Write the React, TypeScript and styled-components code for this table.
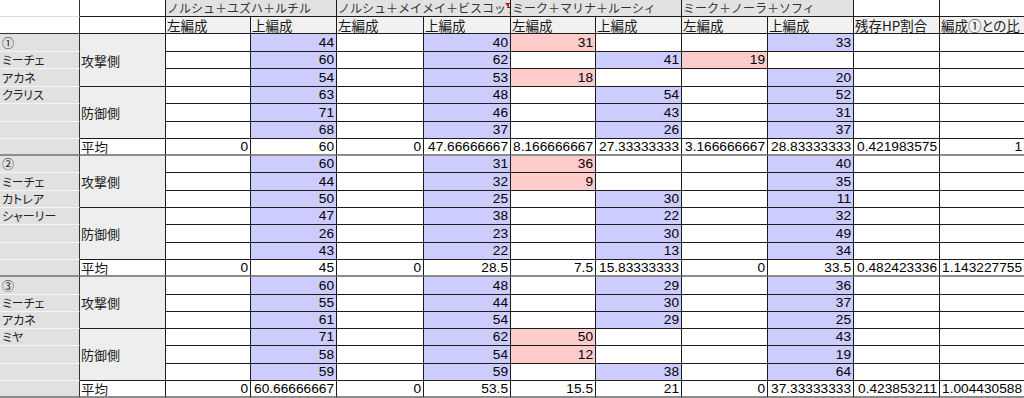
import React from 'react';
import styled, { createGlobalStyle } from 'styled-components';

type Tone = 'w' | 'b' | 'p';

type DataRow = {
  v: Array<string | number>;
  c: string;
};

type Section = {
  mark: string;
  names: string[];
  rows: DataRow[];
  avg: Array<string | number>;
};

const TONES: Record<Tone, string> = {
  w: '#ffffff',
  b: '#ccccff',
  p: '#ffcccc',
};

const ROW_HEIGHTS = [17, 17, 18, 17, 18, 17, 18, 17, 17, 17, 18, 17, 17, 18, 17, 17, 18, 17, 17, 17, 18, 17, 17];
const COL_WIDTHS = [80, 86, 85, 86, 87, 87, 85, 86, 86, 86, 86, 85];

const GROUPS = ['ノルシュ＋ユズハ＋ルチル', 'ノルシュ＋メイメイ＋ビスコッティ', 'ミーク＋マリナ＋ルーシィ', 'ミーク＋ノーラ＋ソフィ'];

const SECTIONS: Section[] = [
  {
    mark: '①',
    names: ['ミーチェ', 'アカネ', 'クラリス'],
    rows: [
      { v: ['', 44, '', 40, 31, '', '', 33, '', ''], c: 'wbwbpwwbww' },
      { v: ['', 60, '', 62, '', 41, 19, '', '', ''], c: 'wbwbwbpwww' },
      { v: ['', 54, '', 53, 18, '', '', 20, '', ''], c: 'wbwbpwwbww' },
      { v: ['', 63, '', 48, '', 54, '', 52, '', ''], c: 'wbwbwbwbww' },
      { v: ['', 71, '', 46, '', 43, '', 31, '', ''], c: 'wbwbwbwbww' },
      { v: ['', 68, '', 37, '', 26, '', 37, '', ''], c: 'wbwbwbwbww' },
    ],
    avg: [0, 60, 0, '47.66666667', '8.166666667', '27.33333333', '3.166666667', '28.83333333', '0.421983575', 1],
  },
  {
    mark: '②',
    names: ['ミーチェ', 'カトレア', 'シャーリー'],
    rows: [
      { v: ['', 60, '', 31, 36, '', '', 40, '', ''], c: 'wbwbpwwbww' },
      { v: ['', 44, '', 32, 9, '', '', 35, '', ''], c: 'wbwbpwwbww' },
      { v: ['', 50, '', 25, '', 30, '', 11, '', ''], c: 'wbwbwbwbww' },
      { v: ['', 47, '', 38, '', 22, '', 32, '', ''], c: 'wbwbwbwbww' },
      { v: ['', 26, '', 23, '', 30, '', 49, '', ''], c: 'wbwbwbwbww' },
      { v: ['', 43, '', 22, '', 13, '', 34, '', ''], c: 'wbwbwbwbww' },
    ],
    avg: [0, 45, 0, 28.5, 7.5, '15.83333333', 0, 33.5, '0.482423336', '1.143227755'],
  },
  {
    mark: '③',
    names: ['ミーチェ', 'アカネ', 'ミヤ'],
    rows: [
      { v: ['', 60, '', 48, '', 29, '', 36, '', ''], c: 'wbwbwbwbww' },
      { v: ['', 55, '', 44, '', 30, '', 37, '', ''], c: 'wbwbwbwbww' },
      { v: ['', 61, '', 54, '', 29, '', 25, '', ''], c: 'wbwbwbwbww' },
      { v: ['', 71, '', 62, 50, '', '', 43, '', ''], c: 'wbwbpwwbww' },
      { v: ['', 58, '', 54, 12, '', '', 19, '', ''], c: 'wbwbpwwbww' },
      { v: ['', 59, '', 59, '', 38, '', 64, '', ''], c: 'wbwbwbwbww' },
    ],
    avg: [0, '60.66666667', 0, 53.5, 15.5, 21, 0, '37.33333333', '0.423853211', '1.004430588'],
  },
];

export default function App() {
  return (
    <>
      <GlobalStyle />
      <Sheet>
        {/* header row 1 */}
        <NameCell $head $light />
        <HeadCell $tone="w" />
        {GROUPS.map((g, i) => (
          <GroupCell key={g}>
            {g}
            {i === 1 && <CommentMark />}
          </GroupCell>
        ))}
        <HeadCell $tone="w" />
        <HeadCell $tone="w" />

        {/* header row 2 */}
        <NameCell $head />
        <HeadCell $tone="w" />
        {GROUPS.map((g) => (
          <React.Fragment key={g}>
            <HeadCell>左編成</HeadCell>
            <HeadCell>上編成</HeadCell>
          </React.Fragment>
        ))}
        <HeadCell>残存HP割合</HeadCell>
        <HeadCell>編成①との比</HeadCell>

        {SECTIONS.map((s) => {
          const labels = [s.mark, ...s.names, '', '', ''];
          return (
            <React.Fragment key={s.mark}>
              {s.rows.map((r, ri) => (
                <React.Fragment key={ri}>
                  <NameCell>{labels[ri]}</NameCell>
                  {ri % 3 === 0 && <SideCell>{ri === 0 ? '攻撃側' : '防御側'}</SideCell>}
                  {r.v.map((val, ci) => (
                    <Cell key={ci} $tone={r.c[ci] as Tone}>
                      {val}
                    </Cell>
                  ))}
                </React.Fragment>
              ))}
              <NameCell $end>{labels[6]}</NameCell>
              <LabelCell $end>平均</LabelCell>
              {s.avg.map((val, ci) => (
                <Cell key={ci} $end>
                  {val}
                </Cell>
              ))}
            </React.Fragment>
          );
        })}
      </Sheet>
    </>
  );
}

/*
 * Styles
 */

const GlobalStyle = createGlobalStyle`
  html, body {
    margin: 0;
    padding: 0;
    background: #ffffff;
    overflow: hidden;
  }
`;

const JP_FONT = `'Noto Sans CJK JP', 'Liberation Sans', sans-serif`;
const LINE = '#1c1c1c';

const Sheet = styled.div`
  display: grid;
  grid-template-columns: ${COL_WIDTHS.map((w) => `${w}px`).join(' ')};
  grid-template-rows: ${ROW_HEIGHTS.map((h) => `${h}px`).join(' ')};
  width: ${COL_WIDTHS.reduce((a, b) => a + b, 0)}px;
`;

const Cell = styled.div<{ $tone?: Tone; $end?: boolean }>`
  display: flex;
  align-items: flex-end;
  justify-content: flex-end;
  box-sizing: border-box;
  overflow: hidden;
  white-space: nowrap;
  padding: 0 2px ${(p) => (p.$end ? '0' : '1px')} 1px;
  border-right: 1px solid ${LINE};
  border-bottom: ${(p) => (p.$end ? '2px solid #8c8c8c' : `1px solid ${LINE}`)};
  background: ${(p) => TONES[p.$tone ?? 'w']};
  font-family: 'Liberation Sans', Arial, sans-serif;
  font-size: 13.7px;
  line-height: 15px;
  color: #000;
`;

const LabelCell = styled(Cell)`
  justify-content: flex-start;
  font-family: ${JP_FONT};
  font-feature-settings: 'palt';
  font-size: 13.5px;
  line-height: 14px;
  color: #1a1a1a;
`;

const HeadCell = styled(LabelCell)<{ $tone?: Tone }>`
  background: ${(p) => (p.$tone === 'w' ? '#ffffff' : '#f1f1f1')};
  padding-bottom: 1px;
`;

const GroupCell = styled.div`
  position: relative;
  grid-column: span 2;
  display: flex;
  align-items: flex-end;
  box-sizing: border-box;
  overflow: hidden;
  white-space: nowrap;
  padding: 0 0 1px 1px;
  border-right: 1px solid ${LINE};
  border-bottom: 1px solid ${LINE};
  background: #e2e2e2;
  font-family: ${JP_FONT};
  font-size: 12px;
  line-height: 14px;
  color: #333;
`;

const CommentMark = styled.span`
  position: absolute;
  top: 3px;
  right: 1px;
  width: 0;
  height: 0;
  border-left: 4px solid transparent;
  border-top: 5px solid #e00000;
`;

const NameCell = styled.div<{ $head?: boolean; $light?: boolean; $end?: boolean }>`
  display: flex;
  align-items: flex-end;
  box-sizing: border-box;
  overflow: hidden;
  white-space: nowrap;
  padding: 0 0 ${(p) => (p.$end ? '0' : '1px')} 2px;
  border-right: 1px solid #333;
  border-bottom: ${(p) =>
    p.$end ? '2px solid #8c8c8c' : p.$light ? '1px solid #dddddd' : p.$head ? '1px solid #333' : '1px solid #f4f4f4'};
  background: ${(p) => (p.$head ? '#ffffff' : '#e1e1e1')};
  font-family: ${JP_FONT};
  font-feature-settings: 'palt';
  font-size: 12px;
  line-height: 14px;
  color: #222;
`;

const SideCell = styled.div`
  grid-row: span 3;
  display: flex;
  align-items: center;
  box-sizing: border-box;
  padding: 0 0 0 1px;
  border-right: 1px solid ${LINE};
  border-bottom: 1px solid ${LINE};
  background: #eeeeee;
  font-family: ${JP_FONT};
  font-feature-settings: 'palt';
  font-size: 13px;
  color: #1a1a1a;
`;
